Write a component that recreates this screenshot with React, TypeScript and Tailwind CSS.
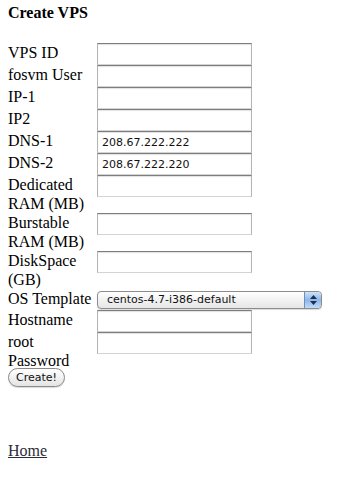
import React from 'react'

const rows: { label: string; value?: string }[] = [
  { label: 'VPS ID' },
  { label: 'fosvm User' },
  { label: 'IP-1' },
  { label: 'IP2' },
  { label: 'DNS-1', value: '208.67.222.222' },
  { label: 'DNS-2', value: '208.67.222.220' },
  { label: 'Dedicated RAM (MB)' },
  { label: 'Burstable RAM (MB)' },
  { label: 'DiskSpace (GB)' },
]

const TextBox = ({ value }: { value?: string }) => (
  <input
    type="text"
    defaultValue={value}
    className="block h-[22px] w-[155px] border border-t-[#7d7d7d] border-r-[#b4b4b4] border-b-[#d4d4d4] border-l-[#b4b4b4] bg-white px-[4px] font-['DejaVu_Sans',sans-serif] text-[11px] text-[#111] shadow-[inset_0_1px_1px_rgba(0,0,0,0.12)] outline-none"
  />
)

const Stepper = () => (
  <span className="flex h-full w-[17px] flex-col items-center justify-center gap-[2px] rounded-r-[4px] border-l border-[#6f8fbf] bg-gradient-to-b from-[#cfe2f8] via-[#8db6e8] to-[#c2dbf7]">
    <svg width="7" height="4" viewBox="0 0 7 4">
      <path d="M0 4 L3.5 0 L7 4 Z" fill="#1d2f52" />
    </svg>
    <svg width="7" height="4" viewBox="0 0 7 4">
      <path d="M0 0 L3.5 4 L7 0 Z" fill="#1d2f52" />
    </svg>
  </span>
)

const App = () => {
  return (
    <div className="min-h-screen bg-white px-[8px] pt-[3px] font-['Liberation_Serif',serif] text-[16px] leading-[19px] text-black">
      <h1 className="mb-[21px] text-[16px] font-bold leading-[19px]">Create VPS</h1>

      <div className="grid grid-cols-[89px_auto] items-start">
        {rows.map((r) => (
          <React.Fragment key={r.label}>
            <div>{r.label}</div>
            <TextBox value={r.value} />
          </React.Fragment>
        ))}

        <div>OS Template</div>
        <div className="mb-[1px] mt-[2px] flex h-[18px] w-[225px] items-center overflow-hidden rounded-[4px] border border-[#8c8c8c] bg-gradient-to-b from-white to-[#e6e6e6] shadow-[0_1px_1px_rgba(0,0,0,0.15)]">
          <span className="flex-1 pl-[9px] font-['DejaVu_Sans',sans-serif] text-[11px] leading-[16px] text-[#111]">
            centos-4.7-i386-default
          </span>
          <Stepper />
        </div>

        <div>Hostname</div>
        <TextBox />

        <div>root Password</div>
        <TextBox />
      </div>

      <button
        type="button"
        className="-mt-[2px] flex h-[19px] w-[57px] items-center justify-center rounded-full border border-[#8a8a8a] bg-gradient-to-b from-white to-[#e4e4e4] font-['DejaVu_Sans',sans-serif] text-[11px] leading-[17px] text-[#111] shadow-[0_1px_1px_rgba(0,0,0,0.15)]"
      >
        Create!
      </button>

      <div className="mt-[54px]">
        <a href="#" className="text-[#2b2b3a] underline">
          Home
        </a>
      </div>
    </div>
  )
}

export default App
